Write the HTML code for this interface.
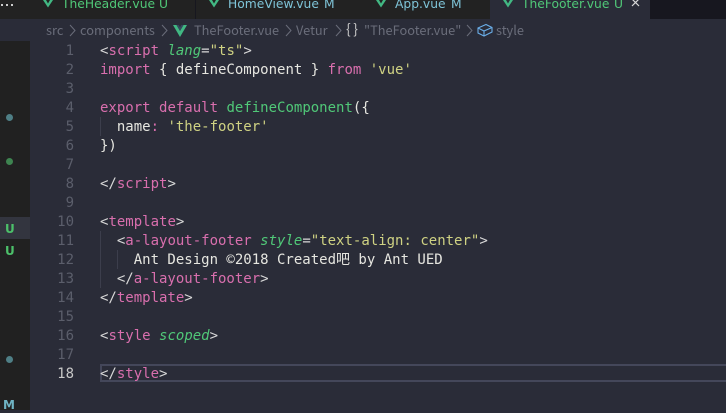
<!DOCTYPE html>
<html><head><meta charset="utf-8"><style>
html,body{margin:0;padding:0;width:726px;height:410px;overflow:hidden;background:#2a2c38}
.a{position:absolute;white-space:pre}
#tabs{position:absolute;left:0;top:0;width:726px;height:19px;background:#17171f;overflow:hidden}
.tab{position:absolute;top:0;height:19px;background:#222222}
.t{position:absolute;top:-6px;font:12.3px/20px "DejaVu Sans",sans-serif;white-space:pre}
.crumb{position:absolute;top:20px;font:12.8px/19px "Noto Sans CJK JP",sans-serif;color:#6a6d7a;white-space:pre}
.n{position:absolute;left:30px;width:44px;text-align:right;font:14px/19px "DejaVu Sans Mono",monospace;color:#5b5e6b}
.c{position:absolute;left:100px;font:14px/19px "DejaVu Sans Mono","WenQuanYi Zen Hei",monospace;color:#e6e6e0;white-space:pre}
.p{color:#d96fae}.g{color:#50c878;font-style:italic}.f{color:#50c878}.y{color:#cfd283}.w{color:#d8d8d8}
.dot{position:absolute;left:6px;width:7px;height:7px;border-radius:50%}
.u{position:absolute;font:bold 12px/16px "DejaVu Sans",sans-serif}
</style></head><body>
<div id="tabs">
<div class="tab" style="left:0;width:195px"></div>
<div class="tab" style="left:196px;width:168px"></div>
<div class="tab" style="left:364px;width:126px"></div>
<div class="tab" style="left:490px;width:160px;background:#2a2c38"></div>
<div class="a" style="left:1px;top:4px;width:2px;height:2px;background:#ccc;box-shadow:5px 0 #ccc,10px 0 #ccc"></div>
<svg class="a" style="left:42px;top:0" width="12" height="8"><path d="M1 0L6 7.5L11 0H8L6 3.5L4 0Z" fill="#42b883"/></svg>
<span class="t" style="left:62px;color:#50c878">TheHeader.vue</span><span class="t" style="left:159px;color:#50c878">U</span>
<svg class="a" style="left:208px;top:0" width="12" height="8"><path d="M1 0L6 7.5L11 0H8L6 3.5L4 0Z" fill="#42b883"/></svg>
<span class="t" style="left:228px;color:#7fc4d8">HomeView.vue</span><span class="t" style="left:324px;color:#7fc4d8">M</span>
<svg class="a" style="left:375px;top:0" width="12" height="8"><path d="M1 0L6 7.5L11 0H8L6 3.5L4 0Z" fill="#42b883"/></svg>
<span class="t" style="left:395px;color:#7fc4d8">App.vue</span><span class="t" style="left:451px;color:#7fc4d8">M</span>
<svg class="a" style="left:502px;top:0" width="12" height="8"><path d="M1 0L6 7.5L11 0H8L6 3.5L4 0Z" fill="#42b883"/></svg>
<span class="t" style="left:522px;color:#50c878">TheFooter.vue</span><span class="t" style="left:614px;color:#50c878">U</span>
<svg class="a" style="left:631px;top:0" width="10" height="8"><path d="M1 -1L8 6M8 -1L1 6" stroke="#d8d8d8" stroke-width="1.2" fill="none"/></svg>
</div>

<span class="crumb" style="left:46px">src</span>
<svg class="a" style="left:68px;top:24px" width="10" height="14"><path d="M2 1L7 6.5L2 12" stroke="#6a6d7a" fill="none"/></svg>
<span class="crumb" style="left:80px">components</span>
<svg class="a" style="left:160px;top:24px" width="10" height="14"><path d="M2 1L7 6.5L2 12" stroke="#6a6d7a" fill="none"/></svg>
<svg class="a" style="left:173px;top:24px" width="14" height="13"><path d="M0 1H3.5L7 7L10.5 1H14L7 13Z" fill="#41b883"/><path d="M3.5 1H5.7L7 3.3L8.3 1H10.5L7 7Z" fill="#35495e"/></svg>
<span class="crumb" style="left:194px">TheFooter.vue</span>
<svg class="a" style="left:284px;top:24px" width="10" height="14"><path d="M2 1L7 6.5L2 12" stroke="#6a6d7a" fill="none"/></svg>
<span class="crumb" style="left:296px">Vetur</span>
<svg class="a" style="left:334px;top:24px" width="10" height="14"><path d="M2 1L7 6.5L2 12" stroke="#6a6d7a" fill="none"/></svg>
<span class="crumb" style="left:346px;color:#c8c8c8;font-size:14px;letter-spacing:2.5px">{}</span>
<span class="crumb" style="left:364px">"TheFooter.vue"</span>
<svg class="a" style="left:465px;top:24px" width="10" height="14"><path d="M2 1L7 6.5L2 12" stroke="#6a6d7a" fill="none"/></svg>
<svg class="a" style="left:477px;top:23px" width="16" height="14"><path d="M1 5L9 1.5L15 4.5V9L7 13L1 10ZM1 5L7 8L15 4.5M7 8V13" stroke="#6aaee8" stroke-width="1.1" fill="none"/></svg>
<span class="crumb" style="left:496px">style</span>

<div class="a" style="left:0;top:41px;width:30px;height:369px;background:#212121"></div>
<div class="a" style="left:0;top:217px;width:30px;height:22px;background:#33353f"></div>
<div class="dot" style="top:114px;background:#4f7f86"></div>
<div class="dot" style="top:158px;background:#3e8450"></div>
<div class="dot" style="top:356px;background:#4f7f86"></div>
<span class="u" style="left:5px;top:221px;color:#4cc06a">U</span>
<span class="u" style="left:5px;top:243px;color:#4cc06a">U</span>
<span class="u" style="left:3px;top:397px;color:#6fb4c4">M</span>

<div class="a" style="left:100px;top:364px;width:626px;height:14px;border:2px solid #44475a;border-right:0"></div>
<div class="a" style="left:100px;top:117px;width:1px;height:19px;background:#3c3e4c"></div>
<div class="a" style="left:100px;top:231px;width:1px;height:57px;background:#3c3e4c"></div>
<div class="a" style="left:117px;top:250px;width:1px;height:19px;background:#3c3e4c"></div>

<div class="n" style="top:42px">1</div>
<div class="n" style="top:61px">2</div>
<div class="n" style="top:80px">3</div>
<div class="n" style="top:99px">4</div>
<div class="n" style="top:118px">5</div>
<div class="n" style="top:137px">6</div>
<div class="n" style="top:156px">7</div>
<div class="n" style="top:175px">8</div>
<div class="n" style="top:194px">9</div>
<div class="n" style="top:213px">10</div>
<div class="n" style="top:232px">11</div>
<div class="n" style="top:251px">12</div>
<div class="n" style="top:270px">13</div>
<div class="n" style="top:289px">14</div>
<div class="n" style="top:308px">15</div>
<div class="n" style="top:327px">16</div>
<div class="n" style="top:346px">17</div>
<div class="n" style="top:365px;color:#c8c8c8">18</div>

<div class="c" style="top:42px"><span class="w">&lt;</span><span class="p">script</span> <span class="g">lang</span><span class="w">=</span><span class="y">"ts"</span><span class="w">&gt;</span></div>
<div class="c" style="top:61px"><span class="p">import</span> { defineComponent } <span class="p">from</span> <span class="y">'vue'</span></div>
<div class="c" style="top:99px"><span class="p">export</span> <span class="p">default</span> <span class="f">defineComponent</span>({</div>
<div class="c" style="top:118px">  name<span class="p">:</span> <span class="y">'the-footer'</span></div>
<div class="c" style="top:137px">})</div>
<div class="c" style="top:175px"><span class="w">&lt;/</span><span class="p">script</span><span class="w">&gt;</span></div>
<div class="c" style="top:213px"><span class="w">&lt;</span><span class="p">template</span><span class="w">&gt;</span></div>
<div class="c" style="top:232px">  <span class="w">&lt;</span><span class="p">a-layout-footer</span> <span class="g">style</span><span class="w">=</span><span class="y">"text-align: center"</span><span class="w">&gt;</span></div>
<div class="c" style="top:251px">    Ant Design ©2018 Created吧 by Ant UED</div>
<div class="c" style="top:270px">  <span class="w">&lt;/</span><span class="p">a-layout-footer</span><span class="w">&gt;</span></div>
<div class="c" style="top:289px"><span class="w">&lt;/</span><span class="p">template</span><span class="w">&gt;</span></div>
<div class="c" style="top:327px"><span class="w">&lt;</span><span class="p">style</span> <span class="g">scoped</span><span class="w">&gt;</span></div>
<div class="c" style="top:365px"><span class="w">&lt;/</span><span class="p">style</span><span class="w">&gt;</span></div>
</body></html>
